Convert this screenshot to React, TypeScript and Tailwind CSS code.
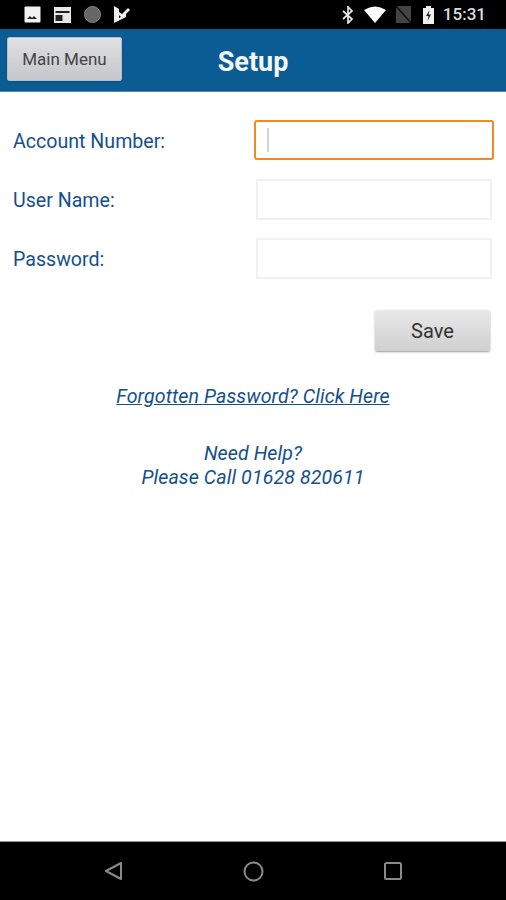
const blue = "text-[#154f8c]";

function Field({ label, focused }: { label: string; focused?: boolean }) {
  return (
    <div className="flex items-center justify-between h-[42px] mb-[17px] pl-[13px] pr-[14px]">
      <label className={`pt-[4px] text-[19.6px] ${blue}`}>{label}</label>
      {focused ? (
        <div className="w-[240px] h-[40px] -mr-[2px] rounded-[3px] border-2 border-[#f08a24] bg-white flex items-center pl-[11px]">
          <div className="w-[2px] h-[24px] bg-[#d4d4d8]" />
        </div>
      ) : (
        <div className="w-[236px] h-[41px] border-2 border-[#f1f1f1] bg-white" />
      )}
    </div>
  );
}

export default function App() {
  return (
    <div className="w-[506px] h-[900px] flex flex-col bg-white font-['Roboto',sans-serif] overflow-hidden">
      <div className="h-[29px] bg-black flex items-center justify-between pl-[24px] pr-[20px] text-white">
        <div className="flex items-center gap-[13px]">
          <svg width="17" height="17" viewBox="0 0 17 17"><rect x="0.5" y="0.5" width="16" height="16" rx="1" fill="#f2f2f2" /><path d="M3 13l3-3 2 2 2-2 3 3z" fill="#222" /></svg>
          <svg width="17" height="16" viewBox="0 0 17 16"><rect x="0" y="0" width="17" height="16" fill="#e8e8e8" /><rect x="1.5" y="4" width="14" height="2" fill="#222" /><rect x="1.5" y="8" width="7" height="6" fill="#222" /></svg>
          <div className="w-[17px] h-[17px] rounded-full bg-[#666666] border border-[#888888]" />
          <svg width="17" height="19" viewBox="0 0 17 19"><path d="M0 1l5 3v3l3 2 6-6 2 2-8 8-3-3v3l7-4v3L0 18z" fill="#f0f0f0" /></svg>
        </div>
        <div className="flex items-center">
          <svg width="12" height="18" viewBox="0 0 12 18" fill="none" stroke="#e8e8e8" strokeWidth="1.7"><path d="M1 5l9 8-4 4V1l4 4-9 8" /></svg>
          <svg className="ml-[10px]" width="22" height="17" viewBox="0 0 22 17"><path d="M0 4Q11-3 22 4L11 17z" fill="#ffffff" /></svg>
          <svg className="ml-[10px]" width="15" height="17" viewBox="0 0 15 17"><path d="M0 0h15v17H0z" fill="#444444" /><path d="M0 0l15 17" stroke="#111" strokeWidth="1.5" /></svg>
          <svg className="ml-[12px]" width="11" height="18" viewBox="0 0 11 18"><path d="M3 0h5v2h3v16H0V2h3z" fill="#f0f0f0" /><path d="M6.500 4L3 10h2.500L4.500 15 8 8.500H5.500z" fill="#222" /></svg>
          <span className="ml-[9px] text-[17px] font-medium text-[#dddddd]">15:31</span>
        </div>
      </div>

      <div className="h-[63px] bg-[#0b5c94] border-b border-[#4f8ab4] relative flex items-center justify-center">
        <button className="absolute left-[7px] top-[8px] w-[115px] h-[44px] pt-[1px] rounded-[2px] bg-gradient-to-b from-[#dfe1e3] to-[#c4c6c9] border border-[#b4c0c9] shadow-sm text-[17px] text-[#444444]">
          Main Menu
        </button>
        <h1 className="pt-[5px] text-[27px] font-bold text-[#f4f8fb]">Setup</h1>
      </div>

      <div className="flex-1 flex flex-col pt-[27px]">
        <Field label="Account Number:" focused />
        <Field label="User Name:" />
        <Field label="Password:" />

        <div className="flex justify-end pr-[16px] mt-[14px]">
          <button className="w-[115px] h-[41px] rounded-[2px] bg-gradient-to-b from-[#e9e9e9] to-[#cfcfcf] shadow-[0_1px_2px_rgba(0,0,0,0.4)] text-[20px] text-[#333333]">
            Save
          </button>
        </div>

        <a className={`mt-[31px] text-center text-[19.6px] tracking-[0.1px] italic underline ${blue}`}>
          Forgotten Password? Click Here
        </a>

        <div className={`mt-[31px] text-center text-[19.6px] tracking-[0.1px] leading-[23.5px] italic ${blue}`}>
          <p>Need Help?</p>
          <p>Please Call 01628 820611</p>
        </div>
      </div>

      <div className="h-[59px] bg-black border-t border-[#999999] flex items-center pl-[104px] pr-[104px] justify-between">
        <svg width="19" height="20" viewBox="0 0 19 20" fill="none" stroke="#8a8a8a" strokeWidth="2"><path d="M17 2L2 10l15 8z" strokeLinejoin="round" /></svg>
        <svg width="21" height="21" viewBox="0 0 21 21" fill="none" stroke="#8a8a8a" strokeWidth="2"><circle cx="10.500" cy="10.500" r="9" /></svg>
        <svg width="18" height="18" viewBox="0 0 18 18" fill="none" stroke="#8a8a8a" strokeWidth="2"><rect x="1" y="1" width="16" height="16" rx="1.500" /></svg>
      </div>
    </div>
  );
}
